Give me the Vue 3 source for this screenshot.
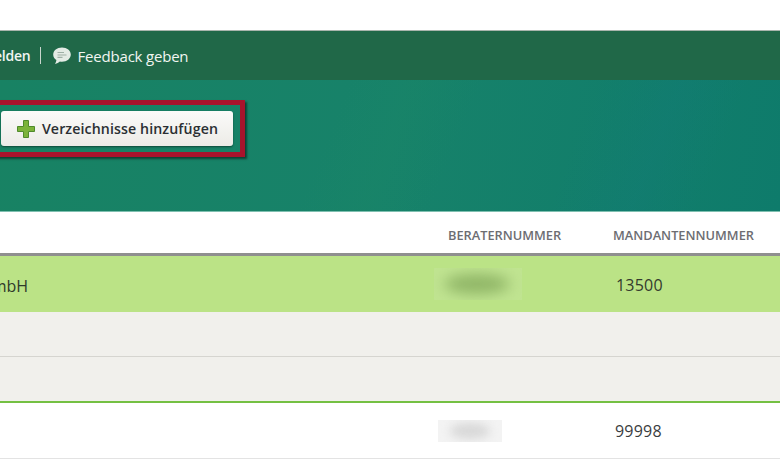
<script setup>
const columns = ['BERATERNUMMER', 'MANDANTENNUMMER']
</script>

<template>
  <div class="page">
    <header class="topbar">
      <span class="link strong">Anmelden</span>
      <span class="divider"></span>
      <svg class="bubble" width="20" height="20" viewBox="0 0 20 20" aria-hidden="true">
        <path d="M10 1.5C5 1.5 1.2 4.6 1.2 8.6c0 2.3 1.2 4.2 3.2 5.5-.1 1.3-.6 2.7-1.4 3.9 2-.4 3.7-1.3 4.9-2.4.7.1 1.4.2 2.1.2 5 0 8.8-3.1 8.8-7.2S15 1.5 10 1.5z" fill="#e4ebe5" />
        <path d="M5.5 6.5h6.5M5.5 9h9M5.5 11.3h5" stroke="#9fb0a6" stroke-width="1.2" fill="none" />
      </svg>
      <span class="link">Feedback geben</span>
    </header>

    <section class="hero">
      <div class="highlight">
        <button class="add" type="button">
          <svg width="20" height="20" viewBox="0 0 20 20" aria-hidden="true">
            <path d="M7.5 1.5h5v6h6v5h-6v6h-5v-6h-6v-5h6z" fill="#7cb33a" stroke="#4f8a2b" stroke-width="1" />
          </svg>
          Verzeichnisse hinzufügen
        </button>
      </div>
    </section>

    <div class="row head">
      <span></span>
      <span v-for="c in columns" :key="c" class="th">{{ c }}</span>
    </div>

    <div class="row selected">
      <span class="name">GmbH</span>
      <span class="cell"><i class="smear dark"></i></span>
      <span class="num">13500</span>
    </div>
    <div class="row empty first"></div>
    <div class="row empty second"></div>
    <div class="row plain">
      <span></span>
      <span class="cell"><i class="smear light"></i></span>
      <span class="num alt">99998</span>
    </div>
  </div>
</template>

<style scoped>
.page {
  width: 780px;
  height: 470px;
  overflow: hidden;
  padding-top: 30px;
  box-sizing: border-box;
  background: #fff;
  font-family: "Open Sans", "Noto Sans", sans-serif;
  color: #333;
}
.topbar {
  height: 50px;
  box-sizing: border-box;
  border-top: 1px solid #a9b5ad;
  background: #206848;
  display: flex;
  align-items: center;
  margin-left: -37px;
  color: #f1f5f1;
  font-size: 15px;
}
.link { white-space: nowrap; letter-spacing: -0.2px; }
.strong { font-weight: 600; font-size: 14px; }
.divider {
  width: 1px;
  height: 17px;
  background: #c9d6cd;
  margin: 0 11px 0 9px;
}
.bubble { margin-right: 6px; }
.hero {
  height: 132px;
  background:
    linear-gradient(112deg, transparent 42%, rgba(30, 140, 95, 0.14) 50%, transparent 58%),
    linear-gradient(112deg, transparent 72%, rgba(20, 120, 130, 0.2) 82%, transparent 90%),
    linear-gradient(100deg, #188263 0%, #17826a 50%, #0e7b6b 100%);
  border-bottom: 1px solid #7fbfb0;
  box-sizing: border-box;
  padding-top: 20px;
}
.highlight {
  width: 255px;
  height: 57px;
  margin-left: -10px;
  box-sizing: border-box;
  border: 5px solid #a8132c;
  box-shadow: 2px 2px 2px rgba(0, 0, 0, 0.5);
  padding: 6px 0 0 6px;
}
.add {
  width: 232px;
  height: 35px;
  border: 0;
  border-radius: 3px;
  background: linear-gradient(#fbfbf9, #ecebe7);
  box-shadow: 0 1px 2px rgba(0, 0, 0, 0.45);
  display: flex;
  align-items: center;
  justify-content: center;
  gap: 6px;
  padding: 0;
  font: 600 14.2px "Open Sans", "Noto Sans", sans-serif;
  letter-spacing: 0.1px;
  color: #2b2f33;
  white-space: nowrap;
}
.row {
  display: grid;
  grid-template-columns: 448px 165px 1fr;
  align-items: center;
  box-sizing: border-box;
}
.head {
  height: 44px;
  border-bottom: 3px solid #8f8f8f;
}
.th {
  font-size: 12.8px;
  font-weight: 600;
  color: #6d6d72;
  white-space: nowrap;
  padding-top: 4px;
}
.selected {
  height: 56px;
  background: #bbe386;
}
.name {
  font-size: 16px;
  margin-left: -20px;
  padding-top: 3px;
  color: #2f3a2a;
}
.cell { display: block; overflow: hidden; margin-left: -14px; width: 88px; height: 32px; position: relative; background: #c0e491; }
.smear {
  position: absolute;
  display: block;
  left: 10px;
  top: 6px;
  width: 66px;
  height: 20px;
  border-radius: 50%;
  filter: blur(7px);
}
.dark { background: #8fb566; }
.selected .num { padding-left: 3px; padding-top: 2px; }
.num { font-size: 16px; letter-spacing: 0.2px; color: #333a2e; }
.alt { padding-left: 2px; color: #3a3d40; }
.empty {
  background: #f1f0ec;
  border-bottom: 1px solid #d6d5d0;
}
.first { height: 45px; }
.second { height: 46px; border-bottom: 2px solid #74c043; }
.plain {
  height: 56px;
  border-bottom: 1px solid #e3e3e3;
}
.plain .cell { margin-left: -10px; width: 64px; height: 22px; background: #f3f3f3; }
.light { background: #d8d8d8; left: 12px; top: 3px; width: 40px; height: 16px; filter: blur(5px); }
</style>
